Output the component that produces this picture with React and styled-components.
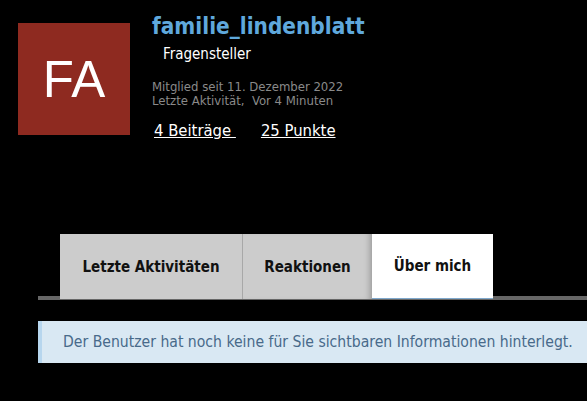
import React from "react"
import styled, {createGlobalStyle} from "styled-components"

const Global = createGlobalStyle`
  html, body {
    margin: 0;
    background: #000;
  }
  body {
    font-family: "DejaVu Sans Condensed", "Liberation Sans Narrow", sans-serif;
  }
`

const Page = styled.div`
  width: 587px;
  height: 401px;
  background: #000;
  overflow: hidden;
`

const Header = styled.div`
  display: flex;
  padding: 13px 0 0 18px;
  gap: 22px;
`

const Avatar = styled.div`
  width: 112px;
  height: 112px;
  margin-top: 10px;
  background: #8e2a20;
  color: #fff;
  font-family: "Liberation Sans", Arial, sans-serif;
  font-size: 51px;
  display: flex;
  align-items: center;
  justify-content: center;
`

const Info = styled.div`
  display: flex;
  flex-direction: column;
`

const Name = styled.div`
  color: #5fa8dc;
  font-size: 22.4px;
  font-weight: bold;
  line-height: 26px;
`

const Rank = styled.div`
  color: #fff;
  font-size: 15px;
  line-height: 18px;
  margin: 6px 0 0 11px;
`

const Meta = styled.div`
  color: #8a8a8a;
  font-size: 13px;
  line-height: 14px;
  margin-top: ${({first}) => first ? "17px" : "0"};
`

const Stats = styled.div`
  display: flex;
  gap: 25px;
  margin: 13px 0 0 2px;
`

const StatLink = styled.a`
  color: #fff;
  font-size: 16.5px;
  text-decoration: underline;
  white-space: pre;
`

const TabStrip = styled.div`
  display: flex;
  margin: 94px 0 0 38px;
  padding-left: 22px;
  height: 62px;
  border-bottom: 4px solid #676767;
`

const Tab = styled.div`
  height: 65px;
  margin-bottom: -3px;
  width: ${({w}) => w}px;
  display: flex;
  align-items: center;
  justify-content: center;
  font-size: 15px;
  font-weight: bold;
  color: #111;
  background: ${({active}) => active ? "#fff" : "#cccccc"};
  border-right: ${({divider}) => divider ? "1px solid #a8a8a8" : "none"};
  border-bottom: ${({active}) => active ? "1px solid #7fa8cc" : "none"};
  box-sizing: border-box;
  box-shadow: ${({shade}) => shade ? "inset -6px 0 6px -4px rgba(0,0,0,0.25)" : "none"};
  position: relative;
  z-index: 1;
`

const Notice = styled.div`
  margin: 21px 0 0 38px;
  height: 42px;
  background: #d9e8f3;
  border-left: 4px solid #b7d6ee;
  padding-left: 21px;
  display: flex;
  align-items: center;
  color: #486a8a;
  font-size: 15.6px;
`

const App = () => {
  return (
    <Page>
      <Global />
      <Header>
        <Avatar>FA</Avatar>
        <Info>
          <Name>familie_lindenblatt</Name>
          <Rank>Fragensteller</Rank>
          <Meta first>Mitglied seit 11. Dezember 2022</Meta>
          <Meta>Letzte Aktivität,&nbsp; Vor 4 Minuten</Meta>
          <Stats>
            <StatLink href="#">4 Beiträge </StatLink>
            <StatLink href="#">25 Punkte</StatLink>
          </Stats>
        </Info>
      </Header>
      <TabStrip>
        <Tab w={183} divider>Letzte Aktivitäten</Tab>
        <Tab w={129} shade>Reaktionen</Tab>
        <Tab w={121} active>Über mich</Tab>
      </TabStrip>
      <Notice>Der Benutzer hat noch keine für Sie sichtbaren Informationen hinterlegt.</Notice>
    </Page>
  )
}

export default App
